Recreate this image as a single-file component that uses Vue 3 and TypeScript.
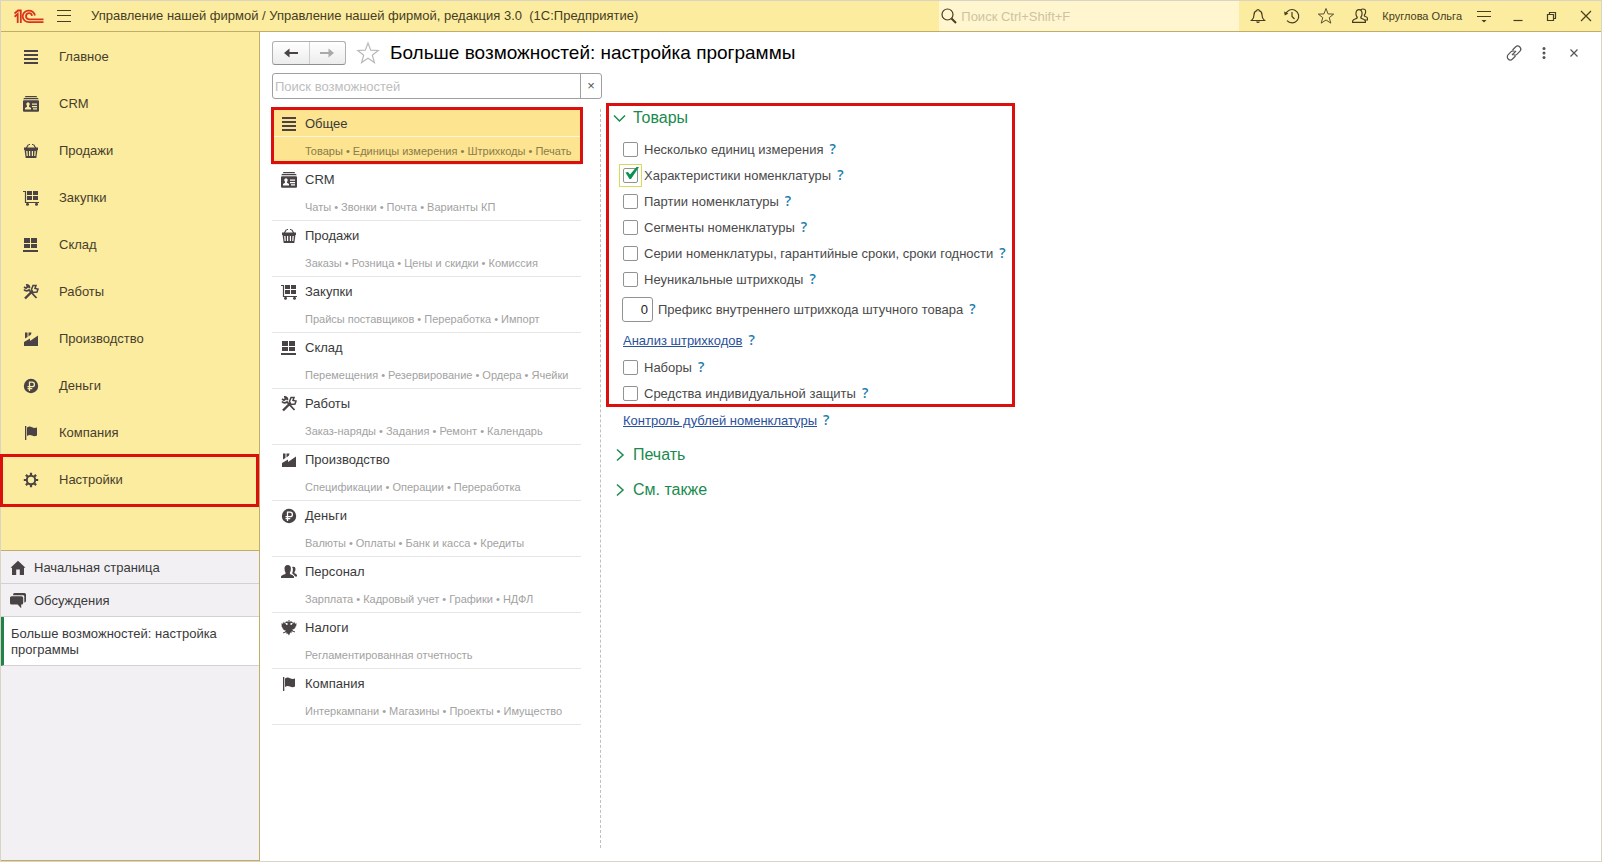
<script setup lang="ts">
import { ref } from 'vue'

interface Section { icon: string; title: string }
interface Category extends Section { details: string[] }
interface Option { id: string; label: string; checked: boolean }

const sections: Section[] = [
  { icon: 'lines', title: 'Главное' },
  { icon: 'crm', title: 'CRM' },
  { icon: 'basket', title: 'Продажи' },
  { icon: 'cart', title: 'Закупки' },
  { icon: 'store', title: 'Склад' },
  { icon: 'tools', title: 'Работы' },
  { icon: 'factory', title: 'Производство' },
  { icon: 'ruble', title: 'Деньги' },
  { icon: 'flag', title: 'Компания' },
  { icon: 'gear', title: 'Настройки' },
]

const categories: Category[] = [
  { icon: 'lines', title: 'Общее', details: ['Товары', 'Единицы измерения', 'Штрихкоды', 'Печать'] },
  { icon: 'crm', title: 'CRM', details: ['Чаты', 'Звонки', 'Почта', 'Варианты КП'] },
  { icon: 'basket', title: 'Продажи', details: ['Заказы', 'Розница', 'Цены и скидки', 'Комиссия'] },
  { icon: 'cart', title: 'Закупки', details: ['Прайсы поставщиков', 'Переработка', 'Импорт'] },
  { icon: 'store', title: 'Склад', details: ['Перемещения', 'Резервирование', 'Ордера', 'Ячейки'] },
  { icon: 'tools', title: 'Работы', details: ['Заказ-наряды', 'Задания', 'Ремонт', 'Календарь'] },
  { icon: 'factory', title: 'Производство', details: ['Спецификации', 'Операции', 'Переработка'] },
  { icon: 'ruble', title: 'Деньги', details: ['Валюты', 'Оплаты', 'Банк и касса', 'Кредиты'] },
  { icon: 'people', title: 'Персонал', details: ['Зарплата', 'Кадровый учет', 'Графики', 'НДФЛ'] },
  { icon: 'eagle', title: 'Налоги', details: ['Регламентированная отчетность'] },
  { icon: 'flag', title: 'Компания', details: ['Интеркампани', 'Магазины', 'Проекты', 'Имущество'] },
]

const mainOptions = ref<Option[]>([
  { id: 'units', label: 'Несколько единиц измерения', checked: false },
  { id: 'traits', label: 'Характеристики номенклатуры', checked: true },
  { id: 'batches', label: 'Партии номенклатуры', checked: false },
  { id: 'segments', label: 'Сегменты номенклатуры', checked: false },
  { id: 'series', label: 'Серии номенклатуры, гарантийные сроки, сроки годности', checked: false },
  { id: 'barcodes', label: 'Неуникальные штрихкоды', checked: false },
])
const extraOptions = ref<Option[]>([
  { id: 'kits', label: 'Наборы', checked: false },
  { id: 'protection', label: 'Средства индивидуальной защиты', checked: false },
])
const prefix = ref('0')
const search = ref('')
const globalSearch = ref('')
const activeSection = ref('Настройки')
const activeCategory = ref('Общее')
</script>

<template>
  <svg class="defs" aria-hidden="true">
    <symbol id="lines" viewBox="0 0 16 16"><path d="M1 1h14v2H1zM1 5h14v2H1zM1 9h14v2H1zM1 13h14v2H1z" /></symbol>
    <symbol id="crm" viewBox="0 0 16 16">
      <path d="M2.500 0h11l.8 1.200H1.700zM1 2h14l.7 1.300H.3z" />
      <path fill-rule="evenodd" d="M1 4.200h14q1 0 1 1v9.600q0 1-1 1H1q-1 0-1-1V5.200q0-1 1-1zM5 6.200a1.800 2 0 0 0-1 3.600v1L2 12v1.500h6V12l-2-1.200v-1a1.800 2 0 0 0-1-3.600zM9 7.500v1.200h5V7.500zM9 10v1.200h5V10zM10 12.300v1.200h4v-1.200z" />
    </symbol>
    <symbol id="basket" viewBox="0 0 16 16">
      <path d="M3 5.500 5.500 1.500M13 5.500 10.500 1.500M6 1.500h1M9 1.500h1" fill="none" stroke="currentColor" stroke-width="1.200" />
      <path d="M1 4.500h14V7H1z" />
      <path d="M1.700 7h12.600v1H1.700zM2.400 13h11.200l-.3 2H2.700zM1.700 8h1.500l.4 5H2.400zM14.300 8h-1.500l-.4 5h1.200zM4.500 8H6v5H4.800zM7.200 8h1.600v5H7.200zM10 8h1.500l-.3 5H10z" />
    </symbol>
    <symbol id="cart" viewBox="0 0 16 16">
      <path d="M0 1.500h2.500v11H16" fill="none" stroke="currentColor" stroke-width="1.200" />
      <path d="M4 1h5v4H4zM10 1h5v4h-5zM4 6h5v4H4zM10 6h5v4h-5z" />
      <circle cx="4.500" cy="14.300" r="1.500" /><circle cx="13.500" cy="14.300" r="1.500" />
    </symbol>
    <symbol id="store" viewBox="0 0 16 16"><path d="M1 1h6v5H1zM8 1h6v5H8zM1 7h6v4H1zM8 7h6v4H8zM0 13h15v2H0z" /></symbol>
    <symbol id="tools" viewBox="0 0 16 16">
      <path d="M1 5.500Q3 8 6 6L13.500 14M1 3l2 1.200L4.500 3 4 1q2.500.5 2.500 3.300" fill="none" stroke="currentColor" stroke-width="1.800" />
      <path d="M2 14.500 9.500 7" fill="none" stroke="currentColor" stroke-width="2.400" />
      <path d="M8.500 5.500 10 1.500h3l-1 3 3 .5-1 3-4 .5z" fill="none" stroke="currentColor" stroke-width="1.500" />
    </symbol>
    <symbol id="factory" viewBox="0 0 16 16">
      <path d="M1 15v-4l6-3.500V10l8-5.500V15z" /><path d="M2 1.500h2.500V6L2 7.500zM5.500 1.500h3L8 3.500l-2.500 2z" />
    </symbol>
    <symbol id="ruble" viewBox="0 0 16 16">
      <circle cx="8" cy="8" r="7.200" />
      <path class="cut" d="M6.500 13V4.200h2.700a2.200 2.200 0 0 1 0 4.400H4.500M4.500 10.700h4.800" fill="none" stroke-width="1.300" />
    </symbol>
    <symbol id="flag" viewBox="0 0 16 16"><path d="M2 1h1.300v14H2zM4 2.500Q6.500.8 9 2.200t5 .3v8q-2.500 1.300-5 0t-5 .5z" /></symbol>
    <symbol id="gear" viewBox="0 0 16 16">
      <circle cx="8" cy="8" r="4.200" fill="none" stroke="currentColor" stroke-width="2" />
      <path d="M8 .8v2.700M8 12.500v2.700M.8 8h2.700M12.500 8h2.700M2.900 2.900l1.900 1.900M11.200 11.200l1.900 1.900M2.900 13.100l1.900-1.900M11.200 4.800l1.900-1.900" stroke="currentColor" stroke-width="2.200" />
    </symbol>
    <symbol id="people" viewBox="0 0 16 16">
      <path d="M0 14v-1.500Q.5 11 4.500 10V8.500Q3.500 7 3.500 4.500 3.500 1 6.700 1t3.200 3.500Q9.900 7 8.900 8.500V10q3.600 1 4.100 2.500V14z" />
      <path d="M11 3Q14.500 2 14.500 5q0 2-1 3v1.200q2.200.6 2.500 2v1.300h-2Q13.500 11 11.300 9.500V8.700q.8-2 .6-4.200z" />
    </symbol>
    <symbol id="eagle" viewBox="0 0 16 16">
      <path d="M7.500 0h1v2l1.500-.8 2 1-1 .8L9.500 3v2h1l1.300-2 .2-1L13 3.500l1-2 .2 2.500L15.500 3l-.2 3-1 .3.700.7-1.500 1 .3.800-2 .7H11l1.500 1.500h1.200v1.500l-2-1-1.700.3 1 1.500-1.700-.8L8 15.500l-1.300-2-1.700.8 1-1.500-1.700-.3-2 1V12h1.200L5 10.500h-.8l-2-.7.300-.8L1 8l.7-.7-1-.3L.5 3l1.300 1L2 1.500l1 2L4 2l.2 1 1.300 2h1V3L5 3l-1-.8 2-1 1.500.8z" />
    </symbol>
    <symbol id="home" viewBox="0 0 16 16"><path d="M8 .8l7.500 7H14V15H9.800V9.500H6.200V15H2V7.800H.5z" /></symbol>
    <symbol id="chat" viewBox="0 0 16 16">
      <path d="M4.500 0H14.500Q16 0 16 1.500V8.500l-1.700 1.200V3.500q0-1.300-1.300-1.300H3Q3 0 4.500 0z" />
      <path d="M1.500 3.200h10q1.700 0 1.700 1.600v5.200q0 1.600-1.600 1.600h-.4v3.600L7.600 11.600H1.500Q0 11.600 0 10V4.800Q0 3.200 1.500 3.200z" />
    </symbol>
    <symbol id="star" viewBox="0 0 24 24"><path d="M12 2l2.700 7.200 7.500.3-5.900 4.700 2.100 7.300L12 17.300l-6.400 4.200 2.100-7.300-5.900-4.700 7.500-.3z" fill="none" stroke="currentColor" stroke-width="1.200" /></symbol>
    <symbol id="arrow" viewBox="0 0 16 16"><path d="M1 8l5.500-4.500V7H15v2H6.500v3.500z" /></symbol>
  </svg>

  <div class="window">
    <header class="titlebar">
      <svg class="logo" viewBox="0 0 30 15" fill="none" stroke="currentColor" stroke-width="1.800" role="img" aria-label="1С">
        <path d="M.5 4.500 4 1.500h2.800V14M.5 7.700l3.200-2.700V14" />
        <path d="M21 6.500A6.200 5.800 0 1 0 15 13.200h14.500M18 6.800A3 3.100 0 1 0 15 10.300h14.500" />
      </svg>
      <button class="bare menu" aria-label="Меню">
        <svg viewBox="0 0 14 12" width="14" height="12"><path d="M0 .5h14M0 5.500h14M0 11.500h14" stroke="currentColor" /></svg>
      </button>
      <span class="app-name">Управление нашей фирмой / Управление нашей фирмой, редакция 3.0 &nbsp;(1С:Предприятие)</span>
      <label class="global-search">
        <svg viewBox="0 0 16 16" width="16" height="16" fill="none" stroke="currentColor"><circle cx="6.500" cy="6.500" r="5.500" stroke-width="1.200" /><path d="M10.500 10.500 15 15" stroke-width="2" /></svg>
        <input v-model="globalSearch" type="text" placeholder="Поиск Ctrl+Shift+F" aria-label="Поиск" />
      </label>
      <div class="tools">
        <button class="bare" aria-label="Оповещения">
          <svg viewBox="0 0 16 16" width="16" height="16" fill="none" stroke="currentColor" stroke-width="1.200"><path d="M1.500 12.500h13Q12 10.500 12 7q0-3.500-2.800-4.300a1.200 1.200 0 0 0-2.400 0Q4 3.500 4 7q0 3.500-2.500 5.500z" /><path d="M6 13.500h4Q9.500 15 8 15t-2-1.500z" fill="currentColor" stroke="none" /></svg>
        </button>
        <button class="bare" aria-label="История">
          <svg viewBox="0 0 16 16" width="16" height="16" fill="none" stroke="currentColor" stroke-width="1.200"><path d="M1.700 6A6.700 6.700 0 1 1 3 12.700M8 4v4.500l2.500 2.500" /><path d="M0 3.500l.8 4 3.500-2z" fill="currentColor" stroke="none" /></svg>
        </button>
        <button class="bare" aria-label="Избранное"><svg width="18" height="18"><use href="#star" /></svg></button>
        <button class="bare" aria-label="Пользователь">
          <svg viewBox="0 0 16 16" width="16" height="16" fill="none" stroke="currentColor" stroke-width="1.200"><path d="M.6 14.400V13Q1 11.500 4 10.700Q6 10 4.700 8.500 3.800 7 4 5q.3-3.400 3-3.400t3 3.400q.2 2-.7 3.500-1.300 1.500.7 2.200 3 .8 3.400 2.300v1.400zM8.700 1.800Q9.600 1 11 1q2.700 0 2.600 2.800 0 1.700-.9 2.900-.9 1.300.6 1.800 2 .6 2.200 2V12h-2.700" /></svg>
        </button>
      </div>
      <span class="user">Круглова Ольга</span>
      <div class="tools">
        <button class="bare" aria-label="Параметры"><svg viewBox="0 0 16 16" width="16" height="16"><path d="M1 3.500h14M1 8.500h14" stroke="currentColor" stroke-width="1.200" /><path d="M5.500 12h5L8 14.500z" /></svg></button>
        <button class="bare" aria-label="Свернуть"><svg viewBox="0 0 16 16" width="16" height="16"><path d="M3.500 12.500h9" stroke="currentColor" stroke-width="1.200" /></svg></button>
        <button class="bare" aria-label="Восстановить"><svg viewBox="0 0 16 16" width="16" height="16" fill="none" stroke="currentColor" stroke-width="1.200"><path d="M3.500 6.500h6v6h-6zM5.500 6V4.500h6v6H10" /></svg></button>
        <button class="bare" aria-label="Закрыть программу"><svg viewBox="0 0 16 16" width="16" height="16"><path d="M3 3l10 10M13 3 3 13" stroke="currentColor" stroke-width="1.200" /></svg></button>
      </div>
    </header>

    <div class="workspace">
      <aside class="sidebar">
        <nav class="sections" aria-label="Разделы">
          <button v-for="s in sections" :key="s.title" class="bare section" :class="{ marked: s.title === activeSection }" @click="activeSection = s.title">
            <svg class="icon"><use :href="'#' + s.icon" /></svg>{{ s.title }}
          </button>
        </nav>
        <nav class="pages" aria-label="Открытые страницы">
          <button class="bare page"><svg class="icon"><use href="#home" /></svg>Начальная страница</button>
          <button class="bare page"><svg class="icon"><use href="#chat" /></svg>Обсуждения</button>
          <button class="bare page current">Больше возможностей: настройка программы</button>
        </nav>
      </aside>

      <main class="content">
        <div class="heading">
          <div class="history">
            <button aria-label="Назад"><svg class="icon"><use href="#arrow" /></svg></button>
            <button aria-label="Вперед" class="forward"><svg class="icon"><use href="#arrow" /></svg></button>
          </div>
          <button class="bare favorite" aria-label="В избранное"><svg width="24" height="24"><use href="#star" /></svg></button>
          <h1>Больше возможностей: настройка программы</h1>
          <div class="form-tools">
            <button class="bare" aria-label="Ссылка"><svg viewBox="0 0 16 16" width="16" height="16" fill="none" stroke="currentColor" stroke-width="1.200"><path d="M6.500 5 9.500 2a2.900 2.900 0 0 1 4.300 4.300l-3 3a2.900 2.900 0 0 1-3.300.500M9.500 11 6.500 14A2.900 2.900 0 0 1 2.200 9.700l3-3a2.900 2.900 0 0 1 3.300-.500M6 10l4-4" /></svg></button>
            <button class="bare" aria-label="Ещё"><svg viewBox="0 0 16 16" width="16" height="16"><circle cx="8" cy="3.500" r="1.500" /><circle cx="8" cy="8" r="1.500" /><circle cx="8" cy="12.500" r="1.500" /></svg></button>
            <button class="bare" aria-label="Закрыть"><svg viewBox="0 0 16 16" width="16" height="16"><path d="M4.500 4.500l7 7M11.500 4.500l-7 7" stroke="currentColor" stroke-width="1.200" /></svg></button>
          </div>
        </div>

        <div class="search">
          <input v-model="search" type="text" placeholder="Поиск возможностей" aria-label="Поиск возможностей" />
          <button aria-label="Очистить" @click="search = ''">×</button>
        </div>

        <div class="columns">
          <div class="categories">
            <button v-for="c in categories" :key="c.title" class="bare category" :class="{ active: c.title === activeCategory }" @click="activeCategory = c.title">
              <span class="cat-title"><svg class="icon"><use :href="'#' + c.icon" /></svg>{{ c.title }}</span>
              <span class="cat-details">{{ c.details.join(' • ') }}</span>
            </button>
          </div>

          <div class="settings">
            <section class="group">
              <h2><button class="bare"><svg class="chevron" viewBox="0 0 14 14"><path d="M1 4.500l5.500 5.500 5.500-5.500" /></svg>Товары</button></h2>
              <div v-for="o in mainOptions" :key="o.id" class="option">
                <span class="check" :class="{ focused: o.checked }">
                  <input :id="o.id" v-model="o.checked" type="checkbox" />
                  <svg v-if="o.checked" class="tick" viewBox="0 0 14 14"><path d="M.5 5.500 3 5l2 2.500L11.500 0H14L6 12H4.500z" /></svg>
                </span>
                <label :for="o.id">{{ o.label }}</label>
                <button class="bare help" aria-label="Справка">?</button>
              </div>
              <div class="option prefix">
                <input id="prefix" v-model="prefix" type="text" />
                <label for="prefix">Префикс внутреннего штрихкода штучного товара</label>
                <button class="bare help" aria-label="Справка">?</button>
              </div>
              <div class="option linked"><a href="#">Анализ штрихкодов</a><button class="bare help" aria-label="Справка">?</button></div>
              <div v-for="o in extraOptions" :key="o.id" class="option">
                <span class="check"><input :id="o.id" v-model="o.checked" type="checkbox" /></span>
                <label :for="o.id">{{ o.label }}</label>
                <button class="bare help" aria-label="Справка">?</button>
              </div>
            </section>
            <div class="option linked"><a href="#">Контроль дублей номенклатуры</a><button class="bare help" aria-label="Справка">?</button></div>
            <div class="folded">
              <h2><button class="bare"><svg class="chevron" viewBox="0 0 14 14"><path d="M4 1.500l6 5.500-6 5.500" /></svg>Печать</button></h2>
              <h2><button class="bare"><svg class="chevron" viewBox="0 0 14 14"><path d="M4 1.500l6 5.500-6 5.500" /></svg>См. также</button></h2>
            </div>
          </div>
        </div>
      </main>
    </div>
  </div>
</template>

<style>
body { margin: 0; }
</style>

<style scoped>
.defs { position: absolute; width: 0; height: 0; }
.window {
  --yellow: #fbeca0;
  --mark: #dc0f0f;
  --line: #bfad68;
  box-sizing: border-box;
  min-height: 100vh;
  display: flex;
  flex-direction: column;
  border: 1px solid #d9d4c4;
  background: #fff;
  color: #3a3a3a;
  font: 13px/16px "Liberation Sans", Arial, sans-serif;
}
.window * { box-sizing: border-box; }
button, input { font: inherit; color: inherit; }
svg { fill: currentColor; flex: none; }
svg[fill="none"] { fill: none; }
.bare { border: 0; padding: 0; margin: 0; background: none; text-align: left; cursor: pointer; }
.icon { width: 16px; height: 16px; color: #4a4345; }
.cut { stroke: var(--yellow); fill: none; }

.titlebar { display: flex; align-items: center; height: 31px; background: var(--yellow); border-bottom: 1px solid var(--line); color: #473d22; }
.logo { width: 30px; height: 15px; margin-left: 13px; color: #d9331c; }
.menu { display: flex; margin: 0 20px 0 13px; }
.app-name { flex: 1; white-space: nowrap; }
.global-search { display: flex; align-items: center; align-self: stretch; width: 300px; padding-left: 2px; background: #fff6cf; }
.global-search input { flex: 1; min-width: 0; border: 0; padding: 1px 4px 0; background: none; outline: none; }
.global-search input::placeholder { color: #cdc3a2; opacity: 1; }
.tools { display: flex; gap: 4px; }
.tools .bare { width: 30px; height: 30px; display: grid; place-items: center; }
.global-search + .tools { margin-left: 4px; }
.user { margin: 0 7px; font-size: 11px; white-space: nowrap; }

.workspace { flex: 1; display: flex; }
.sidebar { flex: 0 0 259px; display: flex; flex-direction: column; border-right: 1px solid var(--line); border-bottom: 1px solid var(--line); background: #f2f0f3; }
.sections { display: flex; flex-direction: column; height: 519px; padding-top: 1px; background: var(--yellow); border-bottom: 1px solid var(--line); }
.section { position: relative; display: flex; align-items: center; gap: 20px; height: 47px; padding-left: 22px; color: #473d2c; }
.section.marked::after { content: ""; position: absolute; inset: -2px 0 -4px -1px; border: 3px solid var(--mark); }
.page { display: flex; align-items: center; gap: 8px; width: 100%; min-height: 33px; padding: 2px 0 0 9px; border-bottom: 1px solid #d3d1d3; }
.page.current { min-height: 49px; padding: 2px 24px 0 7px; background: #fff; border-left: 3px solid #22824c; }

.content { flex: 1; min-width: 0; display: flex; flex-direction: column; padding: 8px 12px 13px; }
.heading { display: flex; align-items: center; height: 25px; }
.history { display: flex; width: 74px; height: 24px; border: 1px solid #b0b0b0; border-bottom-color: #8f8f8f; border-radius: 3px; background: linear-gradient(#fff, #ececec); }
.history button { flex: 1; display: grid; place-items: center; border: 0; padding: 0; background: none; }
.history .forward { border-left: 1px solid #ccc; }
.forward .icon { color: #a9a9a9; transform: scaleX(-1); }
.favorite { display: flex; margin: 0 10px; color: #b9b9b9; }
h1 { flex: 1; margin: 0; color: #000; font-size: 19px; line-height: 24px; font-weight: 400; }
.form-tools { display: flex; }
.form-tools .bare { width: 30px; height: 24px; display: grid; place-items: center; color: #555; }

.search { display: flex; width: 330px; height: 26px; margin-top: 8px; border: 1px solid #a0a0a0; border-radius: 3px; }
.search input { flex: 1; min-width: 0; border: 0; padding: 2px 2px 0; background: none; outline: none; }
.search input::placeholder { color: #bdbdbd; opacity: 1; }
.search button { width: 21px; padding: 0; border: 0; border-left: 1px solid #a0a0a0; background: none; color: #555; }

.columns { flex: 1; display: flex; margin-top: 10px; }
.categories { flex: 0 0 309px; }
.category { position: relative; display: flex; flex-direction: column; width: 100%; height: 56px; border-bottom: 1px solid #e6e5e6; --yellow: #fff; }
.cat-title, .cat-details { display: flex; align-items: center; height: 28px; padding-top: 2px; white-space: nowrap; }
.cat-title { gap: 8px; padding-left: 9px; }
.cat-details { padding-left: 33px; color: #a2a2a2; font-size: 11px; }
.category.active { background: #fde490; }
.active .cat-title { box-shadow: inset 0 -1px #fff6d4; }
.active .cat-details { color: #8c7b4c; }
.category.active::after { content: ""; position: absolute; inset: -2px -2px 0 -1px; border: 3px solid var(--mark); }

.settings { flex: 1; margin-left: 19px; padding-left: 12px; border-left: 1px dashed #c0c0c0; }
.group { position: relative; width: 402px; margin-top: -3px; }
.group::after { content: ""; position: absolute; inset: -3px 0 -1px -7px; border: 3px solid var(--mark); pointer-events: none; }
h2 { margin: 0; font-size: 16px; line-height: 24px; font-weight: 400; color: #1b8a4e; }
h2 .bare { display: flex; align-items: center; gap: 6px; }
.group h2 { margin-bottom: 6px; }
.folded h2 { padding: 5px 0 6px; }
.folded { margin-top: 4px; }
.chevron { width: 14px; height: 14px; fill: none; stroke: currentColor; stroke-width: 1.500; }
.option { display: flex; align-items: center; height: 26px; padding-left: 10px; color: #4a4a4a; white-space: nowrap; }
.option label, .option a { padding-top: 1px; }
.check { position: relative; display: flex; margin-right: 6px; }
.check input { appearance: none; width: 15px; height: 15px; margin: 0; border: 1px solid #929292; border-radius: 2px; background: #fff; }
.check.focused { outline: 1px solid #d9d95a; outline-offset: 3px; }
.tick { position: absolute; left: 2px; top: -1px; width: 14px; height: 14px; color: #0a9150; pointer-events: none; }
.option .help { margin-left: 6px; color: #1b7cab; font: 600 14px/16px "Open Sans", "Noto Sans", sans-serif; }
.option.prefix { height: 34px; padding-left: 9px; }
.prefix input { width: 31px; height: 25px; margin-right: 5px; padding: 0 4px; border: 1px solid #929292; border-radius: 3px; text-align: right; color: #222; }
.option.linked { height: 28px; }
a { color: #2b509c; }
</style>
